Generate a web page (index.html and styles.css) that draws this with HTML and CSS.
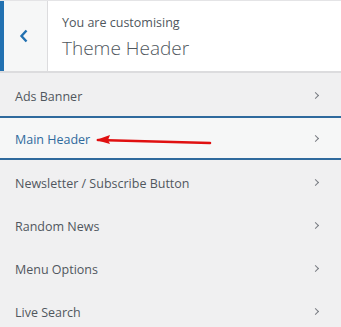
FILE: index.html
```html
<!DOCTYPE html>
<html lang="en">
<head>
  <meta charset="UTF-8" />
  <title>Customise — Theme Header</title>
  <link rel="stylesheet" href="styles.css">
</head>
<body>

<div class="panel">
  <header class="panel-head">
    <button class="back" aria-label="Back">
      <svg width="10" height="14" viewBox="0 0 10 14"><path d="M7.5 1.5 L2.5 7 L7.5 12.5" fill="none" stroke="#2271b1" stroke-width="2.4"/></svg>
    </button>
    <div class="title">
      <span class="pre">You are customising</span>
      <h1>Theme Header</h1>
    </div>
  </header>

  <ul class="sections">
    <li>Ads Banner<i class="chev"></i></li>
    <li class="active">Main Header<i class="chev"></i></li>
    <li>Newsletter / Subscribe Button<i class="chev"></i></li>
    <li>Random News<i class="chev"></i></li>
    <li>Menu Options<i class="chev"></i></li>
    <li>Live Search<i class="chev"></i></li>
  </ul>

  <svg class="pointer" width="130" height="20" viewBox="0 0 130 20">
    <path d="M3 10 L115 13" stroke="#e01010" stroke-width="2.6" stroke-linecap="round"/>
    <path d="M1 10 L15 5 L13 10 L15 14 Z" fill="#e01010"/>
  </svg>
</div>

</body>
</html>
```

FILE: styles.css
```css
body {
  margin: 0;
  background: #f0f0f1;
  font-family: 'Open Sans', 'Noto Sans', sans-serif;
  color: #50575e;
}
.panel {
  position: relative;
  width: 341px;
}
.panel-head {
  display: flex;
  height: 73px;
  background: #fff;
  border-top: 1px solid #e4e4e6;
  border-bottom: 2px solid #dcdcde;
  box-sizing: border-box;
}
.back {
  width: 48px;
  margin: 0;
  padding: 0 4px 0 0;
  border: none;
  border-left: 4px solid #2271b1;
  border-right: 1px solid #dcdcde;
  background: #f6f7f7;
  display: flex;
  align-items: center;
  justify-content: center;
}
.title {
  padding: 13px 0 0 14px;
}
.pre {
  display: block;
  font-size: 12.5px;
  line-height: 18px;
}
h1 {
  margin: 3px 0 0;
  font-size: 19px;
  font-weight: 300;
  line-height: 26px;
  color: #50575e;
}
.sections {
  list-style: none;
  margin: 0;
  padding: 0;
}
.sections li {
  display: flex;
  align-items: center;
  justify-content: space-between;
  height: 43px;
  padding: 3px 23px 0 15px;
  font-size: 12.5px;
  box-sizing: border-box;
}
.sections li.active {
  height: 44px;
  background: #f6f7f7;
  color: #2f6a9d;
  border-top: 2px solid #2f6a9d;
  border-bottom: 2px solid #2f6a9d;
}
.chev {
  width: 4px;
  height: 4px;
  border-right: 1.6px solid #787c82;
  border-top: 1.6px solid #787c82;
  transform: rotate(45deg);
  margin-top: -2px;
}
.pointer {
  position: absolute;
  left: 95px;
  top: 130px;
}
```
